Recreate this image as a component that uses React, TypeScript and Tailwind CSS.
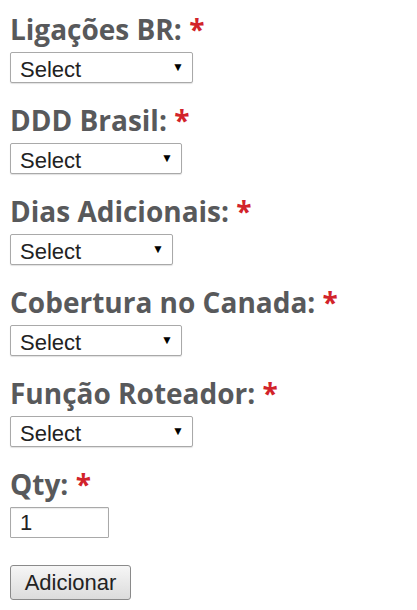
import React from "react";

const labelFont = { fontFamily: "'Open Sans', Lato, sans-serif" };

function Label({ text }: { text: string }) {
  return (
    <div className="text-[28px] leading-[32px] font-bold text-[#58595b] whitespace-nowrap" style={labelFont}>
      {text} <span className="text-[#d2232a]">*</span>
    </div>
  );
}

function FakeSelect({ width }: { width: string }) {
  return (
    <div className={`relative mt-[7px] h-[31px] ${width}`}>
      <select
        className="appearance-none w-full h-full border border-[#a9a9a9] rounded-[2px] bg-white pl-[9px] text-[22px] text-[#222] font-['Liberation_Sans',Arial,sans-serif] shadow-[0_1px_1px_rgba(0,0,0,0.12)]"
        defaultValue="Select"
      >
        <option>Select</option>
      </select>
      <span className="pointer-events-none absolute right-[9px] top-[9px] text-[12px] leading-none text-black">▼</span>
    </div>
  );
}

export default function App() {
  const fields: { label: string; width: string }[] = [
    { label: "Ligações BR:", width: "w-[183px]" },
    { label: "DDD Brasil:", width: "w-[172px]" },
    { label: "Dias Adicionais:", width: "w-[163px]" },
    { label: "Cobertura no Canada:", width: "w-[172px]" },
    { label: "Função Roteador:", width: "w-[183px]" },
  ];

  return (
    <div className="bg-white w-[417px] h-[610px] pl-[10px] pt-[13px] font-['Liberation_Sans',Arial,sans-serif]">
      <div className="flex flex-col gap-[21px]">
        {fields.map((f) => (
          <div key={f.label} className="flex flex-col">
            <Label text={f.label} />
            <FakeSelect width={f.width} />
          </div>
        ))}
        <div className="flex flex-col">
          <Label text="Qty:" />
          <input
            defaultValue="1"
            className="mt-[7px] w-[99px] h-[31px] border border-[#a9a9a9] rounded-[1px] pl-[9px] text-[22px] text-[#222] outline-none shadow-[inset_0_1px_1px_rgba(0,0,0,0.08)]"
          />
        </div>
      </div>
      <button className="mt-[27px] h-[35px] w-[121px] border border-[#8a8a8a] rounded-[3px] bg-gradient-to-b from-[#f6f6f6] to-[#dcdcdc] text-[22px] text-[#222]">
        Adicionar
      </button>
    </div>
  );
}
